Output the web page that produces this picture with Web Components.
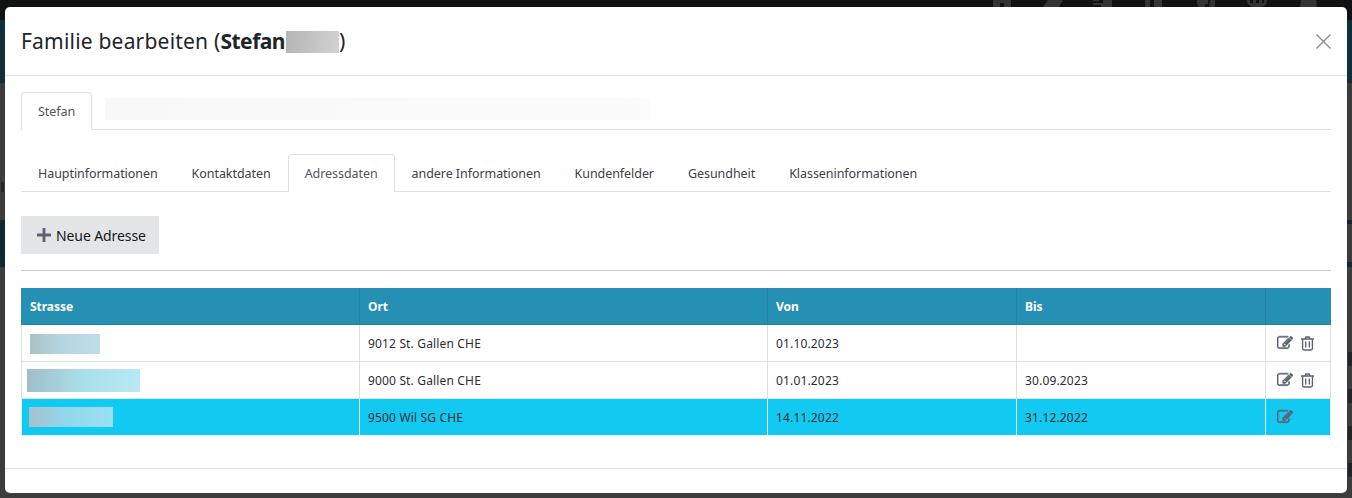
<!DOCTYPE html>
<html lang="de">
<head>
<meta charset="utf-8">
<title>Familie bearbeiten</title>
<style>
  html, body { margin: 0; padding: 0; height: 498px; overflow: hidden; }
  body { font-family: "Noto Sans", sans-serif; }
  b { letter-spacing: -0.5px; }
</style>
</head>
<body>
<page-backdrop>
  <family-modal>
    <span slot="title">Familie bearbeiten (<b>Stefan</b><blur-box w="53" h="22" bg="linear-gradient(100deg,#b4b4b4,#d2d2d2)" style="vertical-align:-4px;margin-left:1px"></blur-box>)</span>

    <tab-bar class="people">
      <tab-item active>Stefan</tab-item>
      <blur-box w="546" h="22" bg="linear-gradient(90deg,#f8f8f8,#fbfafa 70%,#fdfcfc)" style="margin-left:13px;margin-top:6px"></blur-box>
    </tab-bar>

    <tab-bar class="sections" style="margin-top:24px">
      <tab-item>Hauptinformationen</tab-item>
      <tab-item>Kontaktdaten</tab-item>
      <tab-item active>Adressdaten</tab-item>
      <tab-item>andere Informationen</tab-item>
      <tab-item>Kundenfelder</tab-item>
      <tab-item>Gesundheit</tab-item>
      <tab-item>Klasseninformationen</tab-item>
    </tab-bar>

    <add-button>Neue Adresse</add-button>

    <address-table>
      <address-row head>
        <span>Strasse</span><span>Ort</span><span>Von</span><span>Bis</span>
      </address-row>
      <address-row actions="edit trash">
        <span><blur-box w="70" h="20" bg="linear-gradient(90deg,#abc1c8,#b5d6e1 45%,#bfdde8)" style="margin-top:2px"></blur-box></span>
        <span>9012 St. Gallen CHE</span><span>01.10.2023</span><span></span>
      </address-row>
      <address-row actions="edit trash">
        <span><blur-box w="113" h="23" bg="linear-gradient(90deg,#a0bec6,#aadfec 50%,#b8e8f4)" style="margin-left:-3px;margin-top:1px"></blur-box></span>
        <span>9000 St. Gallen CHE</span><span>01.01.2023</span><span>30.09.2023</span>
      </address-row>
      <address-row active actions="edit">
        <span><blur-box w="84" h="20" bg="linear-gradient(90deg,#a5c2cc,#92d8ec 45%,#9ae0f2)" style="margin-left:-1px"></blur-box></span>
        <span>9500 Wil SG CHE</span><span>14.11.2022</span><span>31.12.2022</span>
      </address-row>
    </address-table>
  </family-modal>
</page-backdrop>

<script>
const FONT = '"Noto Sans", sans-serif';

const ICONS = {
  edit: '<svg width="16" height="16" viewBox="0 0 1792 1792" fill="#5c6273" stroke="#5c6273" stroke-width="60"><path d="M888 1184l116-116-152-152-116 116v56h96v96h56zm440-720q-16-16-33 1l-350 350q-17 17-1 33t33-1l350-350q17-17 1-33zm80 594v190q0 119-84.5 203.5t-203.5 84.5h-832q-119 0-203.5-84.5t-84.5-203.5v-832q0-119 84.5-203.5t203.5-84.5h832q63 0 117 25 15 7 18 23 3 17-9 29l-49 49q-14 14-32 8-23-6-45-6h-832q-66 0-113 47t-47 113v832q0 66 47 113t113 47h832q66 0 113-47t47-113v-126q0-13 9-22l64-64q15-15 35-7t20 29zm-96-738l288 288-672 672h-288v-288zm444 132l-92 92-288-288 92-92q28-28 68-28t68 28l152 152q28 28 28 68t-28 68z"/></svg>',
  trash: '<svg width="15" height="15" viewBox="0 0 15 15" fill="none" stroke="#5c6273" stroke-width="1.35"><path d="M1 3h13M2.600 3v9.600q0 1.400 1.400 1.400h7q1.400 0 1.400-1.400V3M5 3l.8-2h3.400l.8 2M5.700 5.500v6M9.300 5.500v6"/></svg>'
};

// clipped bottoms of the nav icons of the page behind
const NAV_SHAPES = [
  [993, 18, 'M0 0h18v7H11V3H7v4H0z'],
  [1043, 20, 'M5 0h15l-4 7H0z'],
  [1093, 19, 'M0 0h6v1H0zM10 0h9v7H8V5H0V3h10z'],
  [1145, 17, 'M0 0h5v7H0zM9 0h8v7H9z'],
  [1197, 18, 'M0 0h11v4H8v3H2L0 4zM13 0h5v7h-6z'],
  [1247, 20, 'M0 0h3v3h3V0h3v3h3V0h3v3h2V0h3q0 7-7 7H7Q0 7 0 0z'],
  [1300, 17, 'M1 0h15l1 7H0z']
];

// dimmed page behind the dialog, only its edges stay visible
class PageBackdrop extends HTMLElement {
  constructor() {
    super();
    this.attachShadow({ mode: 'open' });
    const ghosts = [352, 389, 426, 463];
    this.shadowRoot.innerHTML = `
      <style>
        :host {
          display: block;
          position: relative;
          height: 498px;
          padding: 7px 5px 5px;
          box-sizing: border-box;
          overflow: hidden;
          background: linear-gradient(#111214 0 20px, #0f2f3b 20px 83px, #3c3c3c 83px 220px, #0b2a36 220px 267px, #3c3c3c 267px);
        }
        .right {
          position: absolute;
          right: 0; top: 0; width: 5px; height: 498px;
          background: linear-gradient(#111214 0 20px, #0f2f3b 20px 83px, #3c3c3c 83px 220px, #0b2a36 220px 224px, #3c3c3c 224px 262px, #0b2a36 262px 267px, #3c3c3c 267px);
        }
        .nav { position: absolute; top: 0; height: 7px; fill: #333436; }
        .ghost { position: absolute; right: 0; width: 4px; height: 14px; background: #232425; }
        .letter { position: absolute; left: 1px; top: 182px; width: 3px; height: 10px; background: #262728; }
      </style>
      ${NAV_SHAPES.map(([x, w, d]) => `<svg class="nav" style="left:${x}px" width="${w}" height="7" viewBox="0 0 ${w} 7"><path d="${d}"/></svg>`).join('')}
      <div class="right"></div>
      <div class="letter"></div>
      ${ghosts.map(y => `<div class="ghost" style="top:${y}px"></div>`).join('')}
      <slot></slot>
    `;
  }
}

class FamilyModal extends HTMLElement {
  constructor() {
    super();
    this.attachShadow({ mode: 'open' });
    this.shadowRoot.innerHTML = `
      <style>
        :host {
          display: block;
          position: relative;
          height: 486px;
          background: #fff;
          border-radius: 5px;
          font-family: ${FONT};
          color: #212529;
        }
        header {
          height: 69px;
          box-sizing: border-box;
          border-bottom: 1px solid #e2e2e4;
          padding: 0 16px;
          display: flex;
          align-items: center;
          justify-content: space-between;
        }
        h1 {
          margin: 0;
          font-size: 21px;
          font-weight: 400;
          letter-spacing: 0.2px;
          line-height: 26px;
        }
        svg { display: block; }
        main { padding: 16px 16px 0; }
        footer {
          position: absolute;
          left: 0; right: 0; bottom: 24px;
          border-top: 1px solid #e2e2e4;
        }
      </style>
      <header>
        <h1><slot name="title"></slot></h1>
        <svg width="15" height="15" viewBox="0 0 15 15" stroke="#8a8a8a" stroke-width="1.3"><path d="M.5.5l14 14M14.500.5l-14 14"/></svg>
      </header>
      <main><slot></slot></main>
      <footer></footer>
    `;
  }
}

class BlurBox extends HTMLElement {
  constructor() {
    super();
    this.attachShadow({ mode: 'open' });
    this.shadowRoot.innerHTML = `<style>:host { display: inline-block; }</style>`;
  }
  connectedCallback() {
    this.style.width = this.getAttribute('w') + 'px';
    this.style.height = this.getAttribute('h') + 'px';
    this.style.background = this.getAttribute('bg');
  }
}

class TabBar extends HTMLElement {
  constructor() {
    super();
    this.attachShadow({ mode: 'open' });
    this.shadowRoot.innerHTML = `
      <style>
        :host {
          display: flex;
          align-items: flex-start;
          height: 38px;
          box-sizing: border-box;
          border-bottom: 1px solid #dee0e2;
        }
      </style>
      <slot></slot>
    `;
  }
}

class TabItem extends HTMLElement {
  constructor() {
    super();
    this.attachShadow({ mode: 'open' });
    this.shadowRoot.innerHTML = `
      <style>
        :host {
          display: block;
          height: 38px;
          box-sizing: border-box;
          padding: 0 16px;
          border: 1px solid transparent;
          border-bottom: 0;
          border-radius: 4px 4px 0 0;
          font-size: 12.5px;
          letter-spacing: -0.06px;
          line-height: 37px;
          color: #3c4147;
          white-space: nowrap;
        }
        :host([active]) {
          background: #fff;
          border-color: #dee0e2;
          color: #50565c;
        }
      </style>
      <slot></slot>
    `;
  }
}

class AddButton extends HTMLElement {
  constructor() {
    super();
    this.attachShadow({ mode: 'open' });
    this.shadowRoot.innerHTML = `
      <style>
        :host {
          display: block;
          margin-top: 24px;
          padding-bottom: 16px;
          border-bottom: 1px solid #c8c8c8;
        }
        button {
          display: flex;
          align-items: center;
          gap: 5px;
          width: 138px;
          height: 38px;
          padding: 0 0 0 16px;
          border: 0;
          background: #e4e5e7;
          color: #15171a;
          font-family: inherit;
          font-size: 14px;
          letter-spacing: -0.1px;
        }
      </style>
      <button>
        <svg width="14" height="14" viewBox="0 0 14 14" fill="#5c6273"><path d="M5.600 0h2.800v5.600H14v2.800H8.400V14H5.600V8.400H0V5.600h5.600z"/></svg>
        <slot></slot>
      </button>
    `;
  }
}

class AddressTable extends HTMLElement {
  constructor() {
    super();
    this.attachShadow({ mode: 'open' });
    this.shadowRoot.innerHTML = `
      <style>
        :host {
          display: block;
          margin-top: 17px;
          width: 1310px;
        }
      </style>
      <slot></slot>
    `;
  }
}

class AddressRow extends HTMLElement {
  constructor() {
    super();
    this.attachShadow({ mode: 'open' });
    this.shadowRoot.innerHTML = `
      <style>
        :host {
          display: grid;
          grid-template-columns: 338px 408px 249px 249px 64px;
          height: 37px;
          box-sizing: border-box;
          border: 1px solid #dee0e2;
          border-top: 0;
          align-items: stretch;
          font-size: 12px;
          letter-spacing: 0.16px;
          color: #2a2e33;
        }
        :host([head]) {
          background: #268fb4;
          border-color: #2080a4;
          border-left-color: #268fb4;
          border-right-color: #268fb4;
          color: #fff;
          font-weight: 700;
          letter-spacing: -0.05px;
          --cell-line: #2480a6;
        }
        :host([active]) {
          background: #12c9f2;
          border-color: #e6f4f8;
          --cell-line: #e6f4f8;
        }
        ::slotted(span) {
          display: flex;
          align-items: center;
          padding: 0 8px;
          border-right: 1px solid var(--cell-line, #dee0e2);
          white-space: nowrap;
        }
        .actions {
          display: flex;
          align-items: center;
          gap: 7px;
          padding-left: 11px;
        }
        svg { display: block; }
      </style>
      <slot></slot>
      <div class="actions"></div>
    `;
  }
  connectedCallback() {
    const names = (this.getAttribute('actions') || '').split(' ').filter(Boolean);
    this.shadowRoot.querySelector('.actions').innerHTML = names.map(n => ICONS[n]).join('');
  }
}

customElements.define('page-backdrop', PageBackdrop);
customElements.define('family-modal', FamilyModal);
customElements.define('blur-box', BlurBox);
customElements.define('tab-bar', TabBar);
customElements.define('tab-item', TabItem);
customElements.define('add-button', AddButton);
customElements.define('address-table', AddressTable);
customElements.define('address-row', AddressRow);
</script>
</body>
</html>
